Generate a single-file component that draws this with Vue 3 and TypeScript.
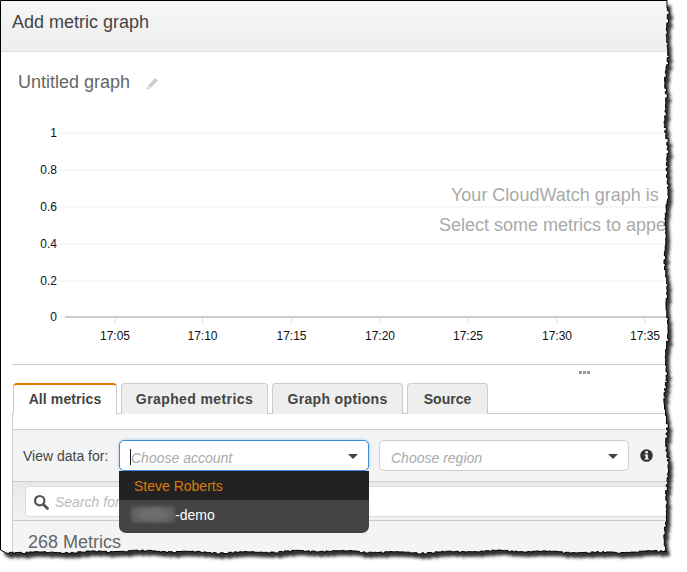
<script setup lang="ts">
const tabs = ['All metrics', 'Graphed metrics', 'Graph options', 'Source']
const yTicks = [
  { label: '1', y: 133 },
  { label: '0.8', y: 170 },
  { label: '0.6', y: 207 },
  { label: '0.4', y: 244 },
  { label: '0.2', y: 281 },
]
const xTicks = [
  { label: '17:05', x: 115 },
  { label: '17:10', x: 202.5 },
  { label: '17:15', x: 291.5 },
  { label: '17:20', x: 380 },
  { label: '17:25', x: 468 },
  { label: '17:30', x: 557 },
  { label: '17:35', x: 645 },
]

let seed = 41
function rnd(): number {
  seed = (seed * 16807) % 2147483647
  return seed / 2147483647
}
function tornEdge(): string {
  const pts: string[] = ['M0.5 0.5', 'L667 0.5', 'L667 8']
  let side = 0
  for (let y = 8; y < 548; y += 1.5 + rnd() * 3) {
    side = side === 0 ? 1 : 0
    const wave = Math.sin(y / 23) * 1.2 + Math.sin(y / 7.3) * 0.9
    const x = 666 + wave + side * (rnd() * 1.8)
    pts.push(`H${x.toFixed(1)} V${y.toFixed(1)}`)
  }
  pts.push('L666 552')
  for (let x = 664; x > 4; x -= 1.5 + rnd() * 3.5) {
    side = side === 0 ? 1 : 0
    const wave = Math.sin(x / 29) * 0.8 + Math.sin(x / 8.1) * 0.6
    const y = 551.5 + wave + side * (rnd() * 1.2)
    pts.push(`V${y.toFixed(1)} H${x.toFixed(1)}`)
  }
  pts.push('L0.5 550', 'Z')
  return pts.join(' ')
}
const edge = tornEdge()
const outside = `M0 0H687V572H0Z ${edge}`
</script>

<template>
  <div class="page">
    <div class="frame">
      <header class="head">Add metric graph</header>
      <div class="title-row">
        <span class="title">Untitled graph</span>
        <svg class="pencil" width="13" height="13" viewBox="0 0 13 13" aria-hidden="true">
          <path d="M9.2 1.1 11.9 3.8 4.6 11.1 1.9 8.4Z" fill="#ccc" />
          <path d="M1.5 9.2 4 11.6 0.6 12.6Z" fill="#ccc" />
        </svg>
      </div>
      <svg class="chart" width="668" height="260" viewBox="0 104 668 260">
        <g v-for="t in yTicks" :key="t.label">
          <line x1="60" x2="668" :y1="t.y" :y2="t.y" stroke="#eee" />
          <text class="axis" x="57" :y="t.y + 4" text-anchor="end">{{ t.label }}</text>
        </g>
        <line x1="60" x2="64" y1="317" y2="317" stroke="#eee" />
        <text class="axis" x="57" y="321" text-anchor="end">0</text>
        <line x1="65" x2="668" y1="317" y2="317" stroke="#ccc" stroke-width="2" />
        <g v-for="t in xTicks" :key="t.label">
          <line :x1="t.x" :x2="t.x" y1="318" y2="323" stroke="#ddd" />
          <text class="axis" :x="t.x" y="340" text-anchor="middle">{{ t.label }}</text>
        </g>
        <text class="empty" x="451" y="201">Your CloudWatch graph is</text>
        <text class="empty" x="439" y="231">Select some metrics to appe</text>
      </svg>
      <div class="bottom">
        <div class="handle"><i></i><i></i><i></i></div>
        <nav class="tabs">
          <div v-for="(t, i) in tabs" :key="t" class="tab" :class="[`tab-${i}`, { active: i === 0 }]">{{ t }}</div>
        </nav>
        <div class="panel">
          <div class="gap"></div>
          <div class="filters">
            <label class="lbl">View data for:</label>
            <div class="dropwrap">
              <div class="select focus">
                <i class="caret-bar"></i>
                <span class="ph">Choose account</span>
                <i class="arrow"></i>
              </div>
              <div class="menu">
                <div class="opt first">Steve Roberts</div>
                <div class="opt second"><span class="blur"></span><span>-demo</span></div>
              </div>
            </div>
            <div class="select region">
              <span class="ph">Choose region</span>
              <i class="arrow"></i>
            </div>
            <svg class="info" width="13" height="13" viewBox="0 0 12 12" aria-hidden="true">
              <circle cx="6" cy="6" r="5.8" fill="#333" />
              <rect x="4.9" y="2" width="2.3" height="2" fill="#fff" />
              <path d="M4.2 5h3v3.7h1v1.1H4.2V8.700h1V6.100h-1Z" fill="#fff" />
            </svg>
          </div>
          <div class="search-row">
            <div class="search">
              <svg width="16" height="16" viewBox="0 0 16 16" aria-hidden="true">
                <circle cx="6.700" cy="6.700" r="4.700" fill="none" stroke="#555" stroke-width="2.200" />
                <path d="M10.200 10.200 14.500 14.500" stroke="#555" stroke-width="2.800" stroke-linecap="round" />
              </svg>
              <span class="ph search-ph">Search for</span>
            </div>
          </div>
          <div class="count">268 Metrics</div>
        </div>
      </div>
    </div>

    <svg class="torn" width="687" height="572" viewBox="0 0 687 572" aria-hidden="true">
      <defs>
        <filter id="soft" x="-5%" y="-5%" width="110%" height="110%">
          <feGaussianBlur stdDeviation="1.800" />
        </filter>
        <clipPath id="outer">
          <path :d="outside" clip-rule="evenodd" />
        </clipPath>
      </defs>
      <path :d="outside" fill="#fff" fill-rule="evenodd" />
      <g clip-path="url(#outer)">
        <path :d="edge" transform="translate(4 5)" fill="#333" filter="url(#soft)" />
      </g>
      <path :d="edge" fill="none" stroke="#000" stroke-width="1" />
    </svg>
  </div>
</template>

<style>
html, body { margin: 0; background: #fff; }
</style>

<style scoped>
.page {
  position: relative;
  width: 687px;
  height: 572px;
  overflow: hidden;
  font-family: "Liberation Sans", Arial, sans-serif;
  background: #fff;
}
.frame { width: 668px; height: 552px; overflow: hidden; }
.head {
  height: 50px;
  margin-top: 1px;
  padding-left: 12px;
  line-height: 43px;
  font-size: 18px;
  color: #444;
  background: linear-gradient(#f6f6f6, #eee);
  border-bottom: 1px solid #ddd;
}
.title-row {
  display: flex;
  align-items: center;
  gap: 16px;
  box-sizing: border-box;
  height: 52px;
  padding: 8px 0 0 18px;
}
.title { font-size: 18px; color: #666; }
.pencil { position: relative; top: 1px; }
.chart { display: block; width: 668px; height: 260px; }
.axis { font: 12px "Liberation Sans", Arial, sans-serif; fill: #111; }
.empty { font: 18px "Liberation Sans", Arial, sans-serif; fill: #aaa; }
.bottom { margin-left: 12px; border-top: 1px solid #ccc; }
.handle {
  display: flex;
  justify-content: flex-end;
  gap: 1px;
  height: 3px;
  padding: 6px 78px 0 0;
}
.handle i { width: 3px; height: 3px; background: #999; }
.tabs {
  display: flex;
  gap: 4px;
  height: 30px;
  margin-top: 9px;
  padding-left: 1px;
  border-bottom: 1px solid #ccc;
}
.tab {
  box-sizing: border-box;
  height: 31px;
  text-align: center;
  line-height: 30px;
  font-size: 14px;
  font-weight: 700;
  color: #444;
  background: #eee;
  border: 1px solid #ccc;
  border-bottom: 0;
  border-radius: 4px 4px 0 0;
}
.tab-0 { width: 104px; letter-spacing: 0.1px; }
.tab-1 { width: 147px; letter-spacing: 0.4px; }
.tab-2 { width: 131px; letter-spacing: 0.35px; }
.tab-3 { width: 81px; }
.tab.active {
  background: #fff;
  border-top: 2px solid #e07b00;
  line-height: 29px;
}
.panel { border-left: 1px solid #ccc; background: #f4f4f4; height: 140px; }
.gap { height: 15px; background: #fff; border-bottom: 1px solid #ccc; }
.filters {
  display: flex;
  align-items: flex-start;
  height: 52px;
  padding: 10px 0 0 10px;
  box-sizing: border-box;
  border-bottom: 1px solid #ccc;
}
.lbl { width: 86px; margin-right: 10px; font-size: 14px; line-height: 31px; color: #444; white-space: nowrap; padding-top: 1px; }
.dropwrap { position: relative; width: 250px; margin-right: 10px; }
.select {
  position: relative;
  box-sizing: border-box;
  display: flex;
  align-items: center;
  width: 250px;
  height: 31px;
  padding: 4px 0 0 11px;
  background: #fff;
  border: 1px solid #ccc;
  border-radius: 5px;
}
.select.focus {
  border-color: #3b8bdc;
  box-shadow: 0 0 3px rgba(60, 140, 220, 0.5);
}
.caret-bar { position: absolute; left: 10px; top: 8px; width: 1px; height: 16px; background: #222; }
.ph { font-size: 14px; font-style: italic; color: #aaa; }
.arrow {
  position: absolute;
  right: 10px;
  top: 13px;
  border-left: 5.500px solid transparent;
  border-right: 5.500px solid transparent;
  border-top: 5.500px solid #444;
}
.menu {
  position: absolute;
  left: 0;
  top: 31px;
  width: 250px;
  border-radius: 0 0 7px 7px;
  overflow: hidden;
  font-size: 14px;
  z-index: 2;
}
.opt { display: flex; align-items: center; padding-left: 15px; }
.first { height: 29px; background: #222; color: #dd7b0c; }
.second { box-sizing: border-box; height: 33px; background: #444; color: #fff; padding: 0 0 4px 12px; }
.blur {
  width: 44px;
  height: 17px;
  background: radial-gradient(ellipse at center, #6e6e6e 35%, #505050 100%);
  filter: blur(1px);
}
.info { margin-left: 11px; margin-top: 9px; flex: none; }
.search-row {
  height: 39px;
  padding: 4px 0 0 12px;
  box-sizing: border-box;
  background: linear-gradient(#e8e8e8, #f2f2f2);
  border-bottom: 1px solid #ccc;
}
.search {
  box-sizing: border-box;
  display: flex;
  align-items: center;
  gap: 6px;
  height: 31px;
  padding-left: 7px;
  margin-right: -4px;
  background: #fff;
  border: 1px solid #ddd;
  border-radius: 4px;
}
.search-ph { color: #bbb; }
.count { padding: 10px 0 0 15px; font-size: 18px; line-height: 22px; color: #666; }
.torn { position: absolute; left: 0; top: 0; pointer-events: none; }
</style>
